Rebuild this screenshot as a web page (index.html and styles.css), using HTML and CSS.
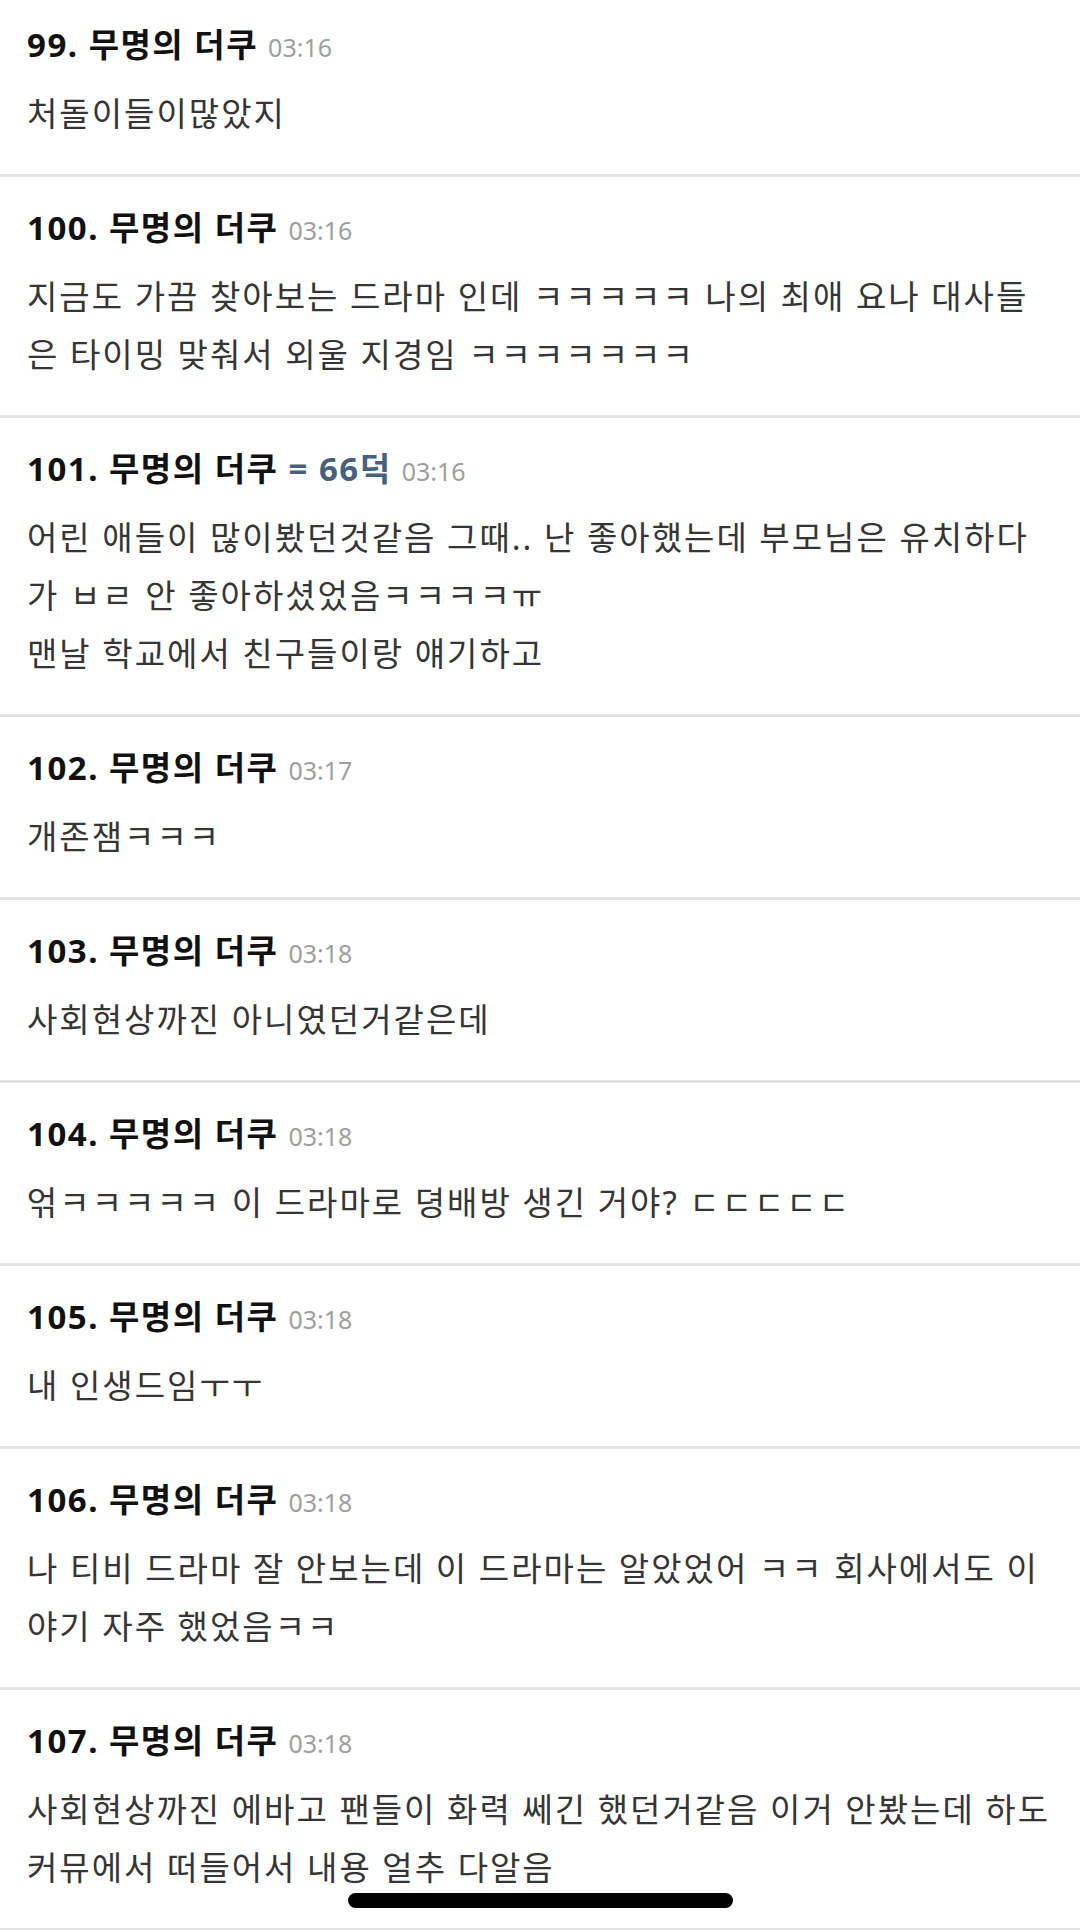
FILE: index.html
```html
<!DOCTYPE html>
<html lang="ko">
<head>
    <meta charset="UTF-8">
    <meta name="viewport" content="width=device-width, initial-scale=1.0">
    <title>댓글</title>
    <link rel="stylesheet" href="styles.css">
</head>
<body>
    <ul class="comments">
        <li class="comment">
            <div class="comment-head"><span class="num">99.</span> <span class="nick">무명의 더쿠</span> <span class="time">03:16</span></div>
            <p class="comment-body">처돌이들이많았지</p>
        </li>
        <li class="comment">
            <div class="comment-head"><span class="num">100.</span> <span class="nick">무명의 더쿠</span> <span class="time">03:16</span></div>
            <p class="comment-body">지금도 가끔 찾아보는 드라마 인데 ㅋㅋㅋㅋㅋ 나의 최애 요나 대사들은 타이밍 맞춰서 외울 지경임 ㅋㅋㅋㅋㅋㅋㅋ</p>
        </li>
        <li class="comment">
            <div class="comment-head"><span class="num">101.</span> <span class="nick">무명의 더쿠</span> <span class="tag">= 66덕</span> <span class="time">03:16</span></div>
            <p class="comment-body">어린 애들이 많이봤던것같음 그때.. 난 좋아했는데 부모님은 유치하다가 ㅂㄹ 안 좋아하셨었음ㅋㅋㅋㅋㅠ<br>맨날 학교에서 친구들이랑 얘기하고</p>
        </li>
        <li class="comment">
            <div class="comment-head"><span class="num">102.</span> <span class="nick">무명의 더쿠</span> <span class="time">03:17</span></div>
            <p class="comment-body">개존잼ㅋㅋㅋ</p>
        </li>
        <li class="comment">
            <div class="comment-head"><span class="num">103.</span> <span class="nick">무명의 더쿠</span> <span class="time">03:18</span></div>
            <p class="comment-body">사회현상까진 아니였던거같은데</p>
        </li>
        <li class="comment">
            <div class="comment-head"><span class="num">104.</span> <span class="nick">무명의 더쿠</span> <span class="time">03:18</span></div>
            <p class="comment-body">얶ㅋㅋㅋㅋㅋ 이 드라마로 뎡배방 생긴 거야? ㄷㄷㄷㄷㄷ</p>
        </li>
        <li class="comment">
            <div class="comment-head"><span class="num">105.</span> <span class="nick">무명의 더쿠</span> <span class="time">03:18</span></div>
            <p class="comment-body">내 인생드임ㅜㅜ</p>
        </li>
        <li class="comment">
            <div class="comment-head"><span class="num">106.</span> <span class="nick">무명의 더쿠</span> <span class="time">03:18</span></div>
            <p class="comment-body">나 티비 드라마 잘 안보는데 이 드라마는 알았었어 ㅋㅋ 회사에서도 이야기 자주 했었음ㅋㅋ</p>
        </li>
        <li class="comment">
            <div class="comment-head"><span class="num">107.</span> <span class="nick">무명의 더쿠</span> <span class="time">03:18</span></div>
            <p class="comment-body">사회현상까진 에바고 팬들이 화력 쎄긴 했던거같음 이거 안봤는데 하도 커뮤에서 떠들어서 내용 얼추 다알음</p>
        </li>
    </ul>

    <div class="home-indicator"></div>
</body>
</html>
```

FILE: styles.css
```css
body {
    margin: 0;
    background-color: #fff;
    font-family: "Noto Sans", "Noto Sans CJK KR", sans-serif;
    overflow: hidden;
}
.comments {
    list-style: none;
    margin: -6px 0 0;
    padding: 0;
}
.comment {
    padding: 28px 27px 31px 27px;
    border-bottom: 3px solid #e3e3e3;
}
.comment-head {
    font-size: 33px;
    line-height: 46px;
    font-weight: 700;
    letter-spacing: 1.5px;
    color: #111;
    white-space: nowrap;
}
.tag {
    color: #46607f;
}
.time {
    font-size: 25px;
    font-weight: 400;
    letter-spacing: 0;
    color: #9e9e9e;
}
.comment-body {
    margin: 15px 0 0;
    font-size: 33px;
    line-height: 58px;
    letter-spacing: 2px;
    color: #353535;
}
.home-indicator {
    position: fixed;
    left: 348px;
    bottom: 22px;
    width: 385px;
    height: 15px;
    border-radius: 8px;
    background-color: #000;
}
```
